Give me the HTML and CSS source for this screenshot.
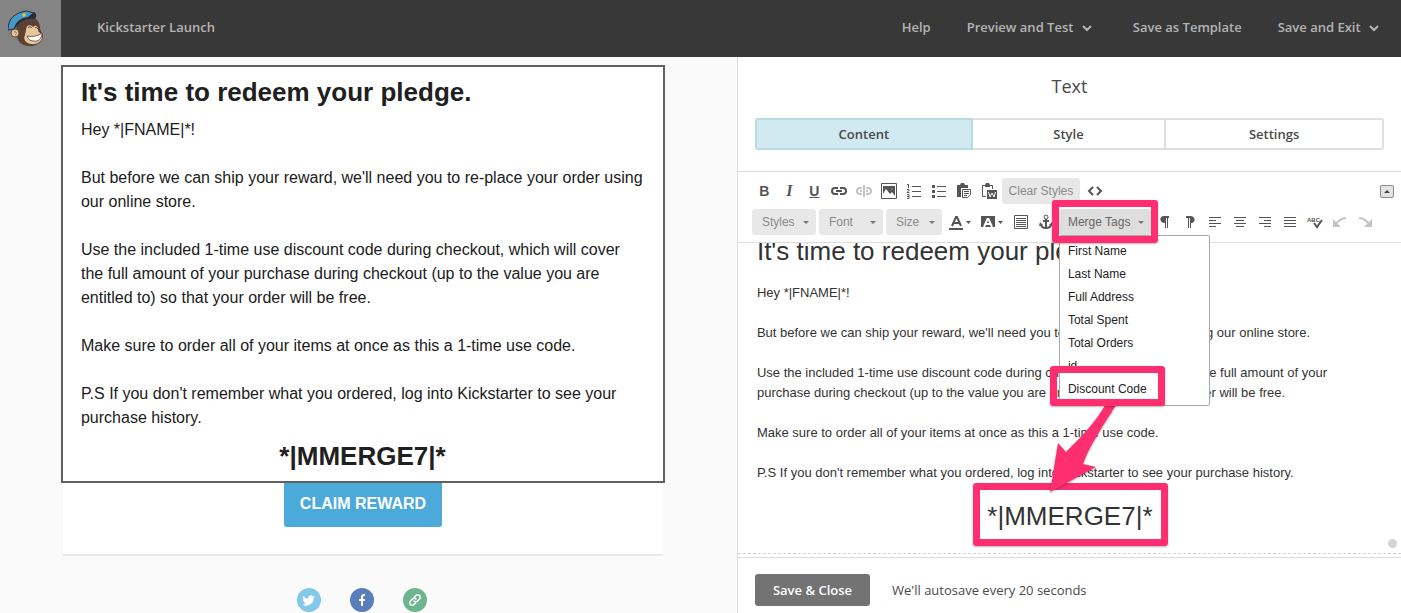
FILE: index.html
```html
<!DOCTYPE html>
<html lang="en">
  <head>
    <meta charset="utf-8">
    <title>Kickstarter Launch</title>
    <link rel="stylesheet" href="styles.css">
  </head>
  <body>
    <header class="topbar">
      <a href="#" class="logo" aria-label="Home">
        <svg width="36" height="38" viewBox="0 0 36 38">
          <path d="M8 14C12 9 20 6 27 8C31 11 32 15 32 19L35 25C35 32 28 37 20 36C13 35 9 31 9 26Z" fill="#5b4034"/>
          <path d="M18 20C18 15 22 14 25 17C28 14 31 17 30 21L34 25C35 31 29 35 23 34C17 33 15 29 17 25Z" fill="#e9c79c"/>
          <circle cx="7" cy="23" r="4" fill="#e9c79c" stroke="#6b4a35"/>
          <path d="M6 22C9 21 9 24 7 25" fill="none" stroke="#9a6c49"/>
          <path d="M19 26C25 27 30 26 34 23C34 29 30 32 25 31C22 31 20 29 19 26Z" fill="#fff" stroke="#7a563f"/>
          <path d="M20 18C21 16 23 17 24 18M27 18C28 17 29 17 30 19" fill="none" stroke="#5b4034"/>
          <path d="M0 20C0 8 7 3 18 1L26 3L22 8C14 8 9 12 6 19Z" fill="#4698c6" stroke="#22313d"/>
          <path d="M6 20C7 12 12 8 20 7L26 2C29 4 29 8 26 9C19 8 12 11 8 17Z" fill="#26303c"/>
          <path d="M14 4l3-1 1 3-3 1z" fill="#d9c04a"/>
        </svg>
      </a>
      <span class="campaign">Kickstarter Launch</span>
      <nav class="topnav">
        <a href="#">Help</a>
        <a href="#" class="has-menu">Preview and Test <svg width="10" height="8" viewBox="0 0 10 8"><path d="M1 2l4 4 4-4"/></svg></a>
        <a href="#">Save as Template</a>
        <a href="#">Save and Exit <svg width="10" height="8" viewBox="0 0 10 8"><path d="M1 2l4 4 4-4"/></svg></a>
      </nav>
    </header>

    <main class="workspace">
      <section class="preview">
        <div class="email">
          <div class="block selected">
            <h1>It's time to redeem your pledge.</h1>
            <p>Hey *|FNAME|*!</p>
            <p>But before we can ship your reward, we'll need you to re-place your order using our online store.</p>
            <p>Use the included 1-time use discount code during checkout, which will cover the full amount of your purchase during checkout (up to the value you are entitled to) so that your order will be free.</p>
            <p>Make sure to order all of your items at once as this a 1-time use code.</p>
            <p>P.S If you don't remember what you ordered, log into Kickstarter to see your purchase history.</p>
            <h2>*|MMERGE7|*</h2>
          </div>
          <div class="block-button">
            <a href="#" class="claim">CLAIM REWARD</a>
          </div>
        </div>
        <div class="social">
          <a href="#" class="twitter" aria-label="Twitter">
            <svg width="13" height="13" viewBox="0 0 24 24"><path fill="#fff" d="M23.6 4.9c-.8.4-1.700.6-2.700.8 1-.6 1.700-1.500 2-2.600-.9.5-1.900.9-3 1.100a4.700 4.700 0 0 0-8.100 4.300C7.900 8.300 4.400 6.400 2.100 3.500a4.700 4.700 0 0 0 1.500 6.300c-.8 0-1.500-.2-2.100-.6 0 2.300 1.600 4.200 3.800 4.700-.7.2-1.400.2-2.100.1.600 1.900 2.300 3.200 4.400 3.300A9.500 9.500 0 0 1 .6 19.200 13.400 13.400 0 0 0 21.200 7.300c1-.6 1.800-1.500 2.400-2.400z"/></svg>
          </a>
          <a href="#" class="facebook" aria-label="Facebook">
            <svg width="14" height="14" viewBox="0 0 14 14"><path fill="#fff" d="M6 13V8H4V6h2V4c0-2 1-3 3-3h1v2H9C8 3 8 4 8 4v2h2l-.3 2H8v5z"/></svg>
          </a>
          <a href="#" class="permalink" aria-label="Link">
            <svg width="12" height="12" viewBox="0 0 24 24" fill="none" stroke="#fff" stroke-width="3" stroke-linecap="round"><path d="M10 14a5 5 0 0 0 7 0l4-4a4.500 4.500 0 0 0-7-7l-3 3M14 10a5 5 0 0 0-7 0l-4 4a4.500 4.500 0 0 0 7 7l3-3"/></svg>
          </a>
        </div>
      </section>

      <section class="panel">
        <h2 class="panel-title">Text</h2>
        <div class="tabs" role="tablist">
          <button class="tab active" role="tab" aria-selected="true">Content</button>
          <button class="tab" role="tab">Style</button>
          <button class="tab" role="tab">Settings</button>
        </div>

        <div class="toolbar">
          <div class="tools">
            <button class="tool glyph" aria-label="Bold"><b>B</b></button>
            <button class="tool glyph serif" aria-label="Italic"><i>I</i></button>
            <button class="tool glyph" aria-label="Underline"><u>U</u></button>
            <button class="tool" aria-label="Link">
              <svg width="16" height="10" viewBox="0 0 16 10"><path class="thick" d="M7 2H4a3 3 0 0 0 0 6h3M9 2h3a3 3 0 0 1 0 6H9M5 5h6"/></svg>
            </button>
            <button class="tool off" aria-label="Unlink">
              <svg width="16" height="12" viewBox="0 0 16 12"><path class="thick" d="M6 3H4a3 3 0 0 0 0 6h2M10 3h2a3 3 0 0 1 0 6h-2M4 6h2M10 6h2M8 0v12"/></svg>
            </button>
            <button class="tool" aria-label="Image">
              <svg width="16" height="16" viewBox="0 0 16 16"><path d="M.5.5h15v15H.5z"/><path class="fill" d="M2 3h12v10l-3-4-2 2-4-5-3 5z"/><circle cx="11" cy="6" r="1" fill="#fff"/></svg>
            </button>
            <button class="tool" aria-label="Numbered list">
              <svg width="16" height="16" viewBox="0 0 16 16"><path d="M6 3.500h9M6 8.500h9M6 13.500h9M1 1.500h1.500V5M1 6.500h2v1L1 9.500h2.500M1 11.500h2v4H1M1 13.500h2"/></svg>
            </button>
            <button class="tool" aria-label="Bulleted list">
              <svg width="16" height="16" viewBox="0 0 16 16"><path d="M6 3.500h9M6 8.500h9M6 13.500h9"/><path class="fill" d="M1 2h3v3H1zM1 7h3v3H1zM1 12h3v3H1z"/></svg>
            </button>
            <button class="tool" aria-label="Paste as text">
              <svg width="16" height="16" viewBox="0 0 16 16"><path class="fill" d="M1 2h3l1-2h3l1 2h3v3H5v9H1z"/><path d="M6.500 6.500h8v5l-3 3h-5zM8 8.500h5M8 10.500h5M8 12.500h3"/></svg>
            </button>
            <button class="tool" aria-label="Paste from Word">
              <svg width="16" height="16" viewBox="0 0 16 16"><path d="M5 13.500H1.500v-11h10V6"/><path class="fill" d="M4 2l1-2h3l1 2v2H4zM6 7h10v9H6z"/><path d="M7.500 9l1.500 5 2-4 2 4 1.500-5" stroke="#fff"/></svg>
            </button>
            <button class="text-tool clear">Clear Styles</button>
            <button class="tool" aria-label="Source">
              <svg width="16" height="10" viewBox="0 0 16 10"><path class="thick" d="M6 1L2 5l4 4M10 1l4 4-4 4"/></svg>
            </button>
            <button class="collapse" aria-label="Collapse toolbar"></button>
          </div>

          <div class="tools">
            <select class="drop" aria-label="Styles"><option>Styles</option></select>
            <select class="drop" aria-label="Font"><option>Font</option></select>
            <select class="drop small" aria-label="Size"><option>Size</option></select>
            <button class="tool wide" aria-label="Text colour">
              <svg width="23" height="16" viewBox="0 0 23 16"><path d="M3 12L7 3h1l4 9M5 9h5" class="thick"/><path class="fill" d="M0 14h14v2H0zM17 7h5l-2.500 3z"/></svg>
            </button>
            <button class="tool wide" aria-label="Background colour">
              <svg width="23" height="16" viewBox="0 0 23 16"><path class="fill" d="M0 2h14v11H0zM17 7h5l-2.500 3z"/><path d="M3 13L6.500 5h1L11 13M5 10h4" stroke="#fff" class="thick"/></svg>
            </button>
            <button class="tool" aria-label="Block">
              <svg width="16" height="16" viewBox="0 0 16 16"><path d="M1.500 1.500h13v13h-13zM3 4.500h10M3 6.500h10M3 8.500h10M3 10.500h10M3 12.500h10"/></svg>
            </button>
            <button class="tool" aria-label="Anchor">
              <svg width="14" height="16" viewBox="0 0 14 16"><path class="thick" d="M7 5v9M4 7h6M2 10c0 3 2 4 5 4s5-1 5-4"/><circle cx="7" cy="3" r="2"/><path class="fill" d="M0 12l1-4 3 3zM14 12l-1-4-3 3z"/></svg>
            </button>
            <div class="merge">
              <button class="text-tool merge-toggle" aria-expanded="true">Merge Tags</button>
              <ul class="merge-menu">
                <li><a href="#">First Name</a></li>
                <li><a href="#">Last Name</a></li>
                <li><a href="#">Full Address</a></li>
                <li><a href="#">Total Spent</a></li>
                <li><a href="#">Total Orders</a></li>
                <li><a href="#">id</a></li>
                <li class="marked">
                  <a href="#">Discount Code</a>
                  <svg class="arrow" width="72" height="98" viewBox="0 0 72 98"><path d="M60 6L72 4C59 26 44 46 36 68L49 71 3 96 11 47 19 56C34 41 49 26 60 6z"/></svg>
                </li>
              </ul>
            </div>
            <button class="tool" aria-label="Left to right">
              <svg width="12" height="12" viewBox="0 0 12 12"><path class="fill" d="M10 0v2H9v10H8V2H7v10H6V7C0 7 0 0 5 0z"/></svg>
            </button>
            <button class="tool" aria-label="Right to left">
              <svg width="12" height="12" viewBox="0 0 12 12"><path class="fill" d="M2 0h4c6 0 6 7 1 7v5H6V2H5v10H4V2H2z"/></svg>
            </button>
            <button class="tool" aria-label="Align left">
              <svg width="14" height="12" viewBox="0 0 14 12"><path d="M1 1.500h12M1 4.500h7M1 7.500h12M1 10.500h7"/></svg>
            </button>
            <button class="tool" aria-label="Align centre">
              <svg width="14" height="12" viewBox="0 0 14 12"><path d="M1 1.500h12M3 4.500h8M1 7.500h12M3 10.500h8"/></svg>
            </button>
            <button class="tool" aria-label="Align right">
              <svg width="14" height="12" viewBox="0 0 14 12"><path d="M1 1.500h12M6 4.500h7M1 7.500h12M6 10.500h7"/></svg>
            </button>
            <button class="tool" aria-label="Justify">
              <svg width="14" height="12" viewBox="0 0 14 12"><path d="M1 1.500h12M1 4.500h12M1 7.500h12M1 10.500h12"/></svg>
            </button>
            <button class="tool" aria-label="Spell check">
              <svg width="16" height="14" viewBox="0 0 16 14"><text x="0" y="7" class="abc">ABC</text><path class="thick" d="M7 8l3 4 5-7"/></svg>
            </button>
            <button class="tool off" aria-label="Undo">
              <svg width="16" height="12" viewBox="0 0 16 12"><path class="thick" d="M14 2C9 2 6 5 3 9"/><path class="fill" d="M1 3v8h8z"/></svg>
            </button>
            <button class="tool off" aria-label="Redo">
              <svg width="16" height="12" viewBox="0 0 16 12"><path class="thick" d="M2 2c5 0 8 3 11 7"/><path class="fill" d="M15 3v8H7z"/></svg>
            </button>
          </div>
        </div>

        <div class="editor">
          <div class="editor-body" contenteditable="true">
            <h1>It's time to redeem your pledge.</h1>
            <p>Hey *|FNAME|*!</p>
            <p>But before we can ship your reward, we'll need you to re-place your order using our online store.</p>
            <p>Use the included 1-time use discount code during checkout, which will cover the full amount of your purchase during checkout (up to the value you are entitled to) so that your order will be free.</p>
            <p>Make sure to order all of your items at once as this a 1-time use code.</p>
            <p>P.S If you don't remember what you ordered, log into Kickstarter to see your purchase history.</p>
            <h2><span class="code">*|MMERGE7|*</span></h2>
          </div>
          <span class="resize"></span>
        </div>

        <footer class="panel-footer">
          <button class="save">Save &amp; Close</button>
          <span>We'll autosave every 20 seconds</span>
        </footer>
      </section>
    </main>
  </body>
</html>
```
FILE: styles.css
```css
* {
  box-sizing: border-box;
}

body {
  margin: 0;
  height: 100vh;
  display: flex;
  flex-direction: column;
  overflow: hidden;
  color: #4a4a4a;
  background: #fff;
  font-family: "Open Sans", sans-serif;
  font-size: 13px;
}

a {
  color: inherit;
  text-decoration: none;
}

button {
  margin: 0;
  padding: 0;
  border: 0;
  background: none;
  color: inherit;
  font: inherit;
  cursor: pointer;
}

h1,
h2,
p,
ul {
  margin: 0;
  padding: 0;
}

/* top bar */
.topbar {
  display: flex;
  flex: none;
  align-items: center;
  height: 57px;
  padding-right: 22px;
  background: #383838;
  color: #b4b4b4;
  font-weight: 600;
}

.logo {
  display: flex;
  align-items: center;
  width: 61px;
  height: 57px;
  padding-left: 8px;
  background: #848484;
}

.campaign {
  margin-left: 36px;
  padding-bottom: 4px;
}

.topnav {
  display: flex;
  gap: 36px;
  margin-left: auto;
  padding-bottom: 4px;
}

.topnav .has-menu {
  margin-right: 5px;
}

.topnav svg {
  margin-left: 5px;
  fill: none;
  stroke: #b4b4b4;
  stroke-width: 2;
}

.workspace {
  display: grid;
  grid-template-columns: 52.6% minmax(0, 1fr);
  flex: 1;
  min-height: 0;
}

/* email preview */
.preview {
  padding: 8px 11px 0 0;
  background: #fafafa;
  color: #202020;
  font-family: "Liberation Sans", sans-serif;
  font-size: 16px;
  line-height: 24px;
  overflow: hidden;
}

.email {
  max-width: 604px;
  margin: 0 auto;
}

.block {
  padding: 9px 19px 9px 18px;
  border: 2px solid #606060;
  background: #fff;
}

.block h1,
.block h2 {
  font-size: 26px;
  line-height: 32px;
}

.block h1 {
  margin-bottom: 10px;
}

.block p + p {
  margin-top: 24px;
}

.block h2 {
  margin-top: 10px;
  text-align: center;
}

.block-button {
  display: flex;
  justify-content: center;
  height: 73px;
  margin: 0 2px;
  border-bottom: 2px solid #eaeaea;
  background: #fff;
}

.claim {
  height: 44px;
  padding: 9px 16px;
  border-radius: 0 0 3px 3px;
  background: #4caadb;
  color: #fff;
  font-weight: bold;
}

.social {
  display: flex;
  justify-content: center;
  gap: 29px;
  padding: 32px 2px 0 0;
}

.social a {
  display: flex;
  align-items: center;
  justify-content: center;
  width: 24px;
  height: 24px;
  border-radius: 50%;
}

.twitter {
  background: #84c8eb;
}

.facebook {
  background: #587ebc;
}

.permalink {
  background: #6db58e;
}

/* editor panel */
.panel {
  display: flex;
  flex-direction: column;
  min-width: 0;
  border-left: 1px solid #ddd;
}

.panel-title {
  padding: 17px 0 19px;
  font-size: 18px;
  font-weight: 400;
  line-height: 25px;
  text-align: center;
}

.tabs {
  display: grid;
  grid-template-columns: 9fr 8fr 9fr;
  margin: 0 17px 21px;
}

.tab {
  height: 32px;
  border: 2px solid #e0e0e0;
  border-left-width: 0;
  font-weight: 600;
}

.tab.active {
  border-width: 2px;
  border-color: #b5dbe4;
  border-radius: 3px 0 0 3px;
  background: #d1e9f1;
}

.tab:last-child {
  border-radius: 0 3px 3px 0;
}

.toolbar {
  position: relative;
  z-index: 1;
  display: grid;
  gap: 5px;
  padding: 6px 7px 7px 14px;
  border: 1px solid #ddd;
  border-width: 1px 0;
  font-family: "Liberation Sans", sans-serif;
  font-size: 12px;
}

.tools {
  display: flex;
  align-items: center;
}

.tool {
  display: flex;
  flex: none;
  align-items: center;
  justify-content: center;
  width: 25px;
  height: 26px;
  color: #555;
}

.tool.wide {
  width: 32px;
}

.tool.off {
  color: #c4c4c4;
}

.tool svg {
  fill: none;
  stroke: currentColor;
}

.tool .thick {
  stroke-width: 2;
}

.tool .fill {
  fill: currentColor;
  stroke: none;
}

.glyph {
  font-size: 14px;
  font-weight: bold;
}

.serif {
  font-family: "Liberation Serif", serif;
  font-size: 16px;
}

.tool .abc {
  fill: currentColor;
  stroke: none;
  font-size: 6px;
  font-weight: bold;
}

.text-tool,
.drop {
  height: 26px;
  border-radius: 3px;
  background-color: #e8e8e8;
  color: #8a8a8a;
}

.clear {
  width: 78px;
  margin-right: 3px;
}

.drop {
  width: 64px;
  margin-right: 3px;
  padding: 0 10px;
  border: 0;
  appearance: none;
  font: inherit;
}

.drop.small {
  width: 56px;
}

.drop,
.merge-toggle {
  background-image: url("data:image/svg+xml,%3Csvg xmlns='http://www.w3.org/2000/svg' width='6' height='3'%3E%3Cpath d='M0 0h6L3 3z' fill='%23777'/%3E%3C/svg%3E");
  background-repeat: no-repeat;
  background-position: right 7px center;
}

.collapse {
  width: 14px;
  height: 13px;
  margin-left: auto;
  border: 1px solid #8a8a8a;
  border-radius: 2px;
  background: #e4e4e4;
}

.collapse::before {
  content: "";
  display: block;
  margin: 0 auto;
  width: 0;
  border: 3px solid transparent;
  border-top: 0;
  border-bottom-color: #444;
}

.merge {
  position: relative;
  margin-right: 2px;
}

.merge-toggle {
  width: 92px;
  padding-left: 9px;
  background-color: #dedede;
  color: #666;
  text-align: left;
}

.merge::after,
.marked::after,
.code::after {
  content: "";
  position: absolute;
  border: 7px solid #ff2e70;
  border-radius: 3px;
  box-shadow: 0 1px 2px rgba(0, 0, 0, 0.3);
  pointer-events: none;
}

.merge::after {
  inset: -9px -7px -8px -7px;
}

.merge-menu {
  position: absolute;
  top: 26px;
  left: 0;
  width: 151px;
  padding: 4px 0;
  border: 1px solid #aaa;
  border-radius: 2px;
  background: #fff;
  color: #222;
  line-height: 23px;
  list-style: none;
}

.merge-menu a {
  display: block;
  padding: 0 8px;
}

.marked {
  position: relative;
}

.marked::after {
  inset: -12px 44px -5px -10px;
}

.arrow {
  position: absolute;
  top: 18px;
  left: -13px;
  fill: #ff2e70;
  filter: drop-shadow(0 1px 1px rgba(0, 0, 0, 0.3));
}

.editor {
  position: relative;
  flex: 1;
  min-height: 0;
  margin-bottom: 3px;
  padding: 0 18px 0 19px;
  border-bottom: 1px dashed #d4d4d4;
  overflow: hidden;
  color: #333;
  font-family: "Liberation Sans", sans-serif;
  line-height: 20px;
}

/* scrolled down a little, the heading runs under the toolbar */
.editor-body {
  margin-top: -8px;
  outline: none;
}

.editor h1,
.editor h2 {
  font-size: 26px;
  font-weight: 400;
  line-height: 32px;
}

.editor h1 {
  margin-bottom: 16px;
}

.editor p + p {
  margin-top: 20px;
}

.editor h2 {
  margin-top: 17px;
  text-align: center;
}

.code {
  position: relative;
}

.code::after {
  inset: -18px -15px -15px -14px;
}

.resize {
  position: absolute;
  right: 4px;
  bottom: 5px;
  width: 9px;
  height: 9px;
  border-radius: 50%;
  background: #d4d4d4;
}

.panel-footer {
  display: flex;
  flex: none;
  align-items: center;
  gap: 22px;
  padding: 16px 17px 7px;
  border-top: 1px solid #ddd;
}

.save {
  height: 32px;
  padding: 0 18px;
  border-radius: 3px;
  background: #737373;
  color: #fff;
  font-weight: 600;
}
```
